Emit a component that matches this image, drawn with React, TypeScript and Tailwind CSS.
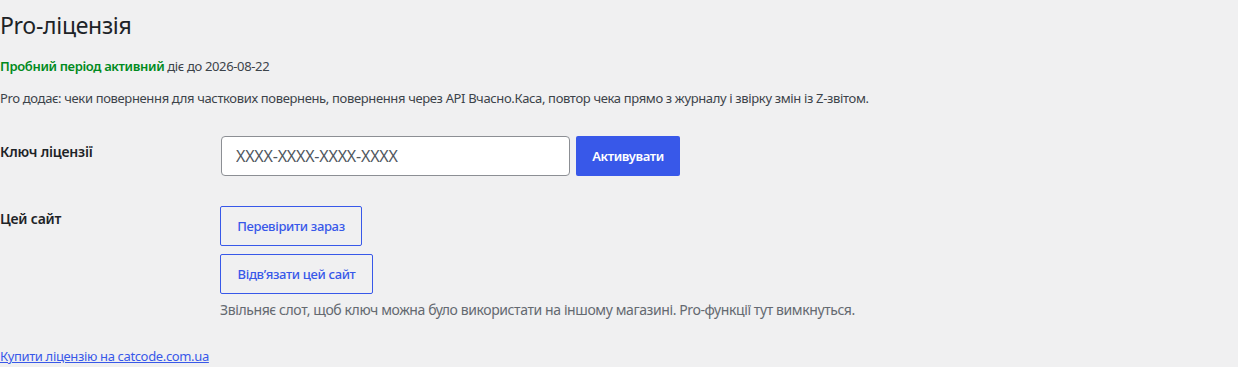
import React from "react";

export default function App() {
  return (
    <div className="min-h-[367px] w-full bg-[#f0f0f1] text-[13px] leading-[1.4] tracking-[-0.35px] text-[#3c434a]" style={{ fontFamily: '"Noto Sans", "Open Sans", sans-serif' }}>
      <h1 className="pt-[11px] text-[23px] font-normal leading-[1.3] tracking-[-0.3px] text-[#1d2327]">Pro-ліцензія</h1>
      <p className="mt-[16px]">
        <span className="font-semibold text-[#008a20]">Пробний період активний</span> діє до 2026-08-22
      </p>
      <p className="mt-[14px]">
        Pro додає: чеки повернення для часткових повернень, повернення через API Вчасно.Каса, повтор чека прямо з журналу і звірку змін із Z-звітом.
      </p>
      <div className="mt-[29px] flex">
        <div className="w-[210px] shrink-0 pr-[10px] pt-[6px] text-[14px] font-semibold tracking-[-0.2px] text-[#1d2327]">Ключ ліцензії</div>
        <div className="flex items-start gap-[6px] pl-[11px]">
          <input
            type="text"
            placeholder="XXXX-XXXX-XXXX-XXXX"
            className="h-[40px] w-[349px] rounded-[4px] border border-[#8c8f94] bg-white px-[14px] text-[16px] tracking-[-0.2px] text-[#2c3338] placeholder:text-[#50575e] outline-none"
          />
          <button className="h-[40px] w-[104px] rounded-[2px] bg-[#3858e9] text-[13px] font-semibold tracking-[-0.4px] text-white">Активувати</button>
        </div>
      </div>
      <div className="mt-[30px] flex">
        <div className="w-[210px] shrink-0 pr-[10px] pt-[3px] text-[14px] font-semibold tracking-[-0.2px] text-[#1d2327]">Цей сайт</div>
        <div className="flex flex-col items-start pl-[10px]">
          <button className="h-[40px] w-[142px] rounded-[2px] border border-[#3858e9] text-[13px] font-medium text-[#3858e9]">Перевірити зараз</button>
          <button className="mt-[8px] h-[40px] w-[153px] rounded-[2px] border border-[#3858e9] text-[13px] font-medium text-[#3858e9]">Відв’язати цей сайт</button>
          <p className="mt-[6px] text-[14px] tracking-[-0.4px] text-[#646970]">Звільняє слот, щоб ключ можна було використати на іншому магазині. Pro-функції тут вимкнуться.</p>
        </div>
      </div>
      <div className="mt-[27px]">
        <a href="#" className="text-[13px] text-[#3858e9] underline">Купити ліцензію на catcode.com.ua</a>
      </div>
    </div>
  );
}
